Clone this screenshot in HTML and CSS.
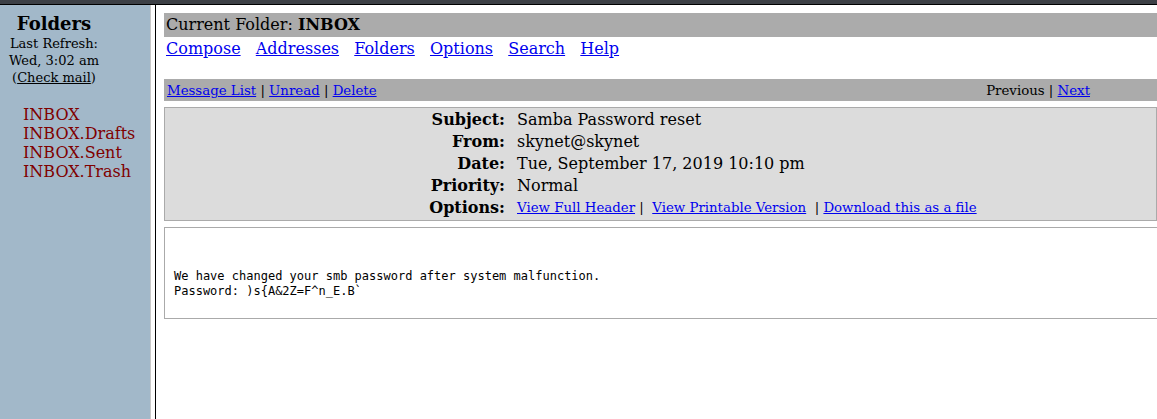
FILE: index.html
```html
<!DOCTYPE html>
<html>
<head>
<meta charset="utf-8">
<title>SquirrelMail</title>
<link rel="stylesheet" href="styles.css">
</head>
<body>
<div class="topbar"></div>
<div class="frames">
  <aside class="left">
    <div class="left-head">
      <div class="folders-title">Folders</div>
      <div class="refresh">Last Refresh:<br>Wed, 3:02 am<br>(<a href="#" class="check">Check mail</a>)</div>
    </div>
    <ul class="folder-list">
      <li>INBOX</li>
      <li>INBOX.Drafts</li>
      <li>INBOX.Sent</li>
      <li>INBOX.Trash</li>
    </ul>
  </aside>
  <div class="divider"></div>
  <main class="right">
    <div class="current">Current Folder: <b>INBOX</b></div>
    <nav class="menu">
      <a href="#">Compose</a>
      <a href="#">Addresses</a>
      <a href="#">Folders</a>
      <a href="#">Options</a>
      <a href="#">Search</a>
      <a href="#">Help</a>
    </nav>
    <div class="msgbar">
      <div class="msgbar-left"><a href="#">Message List</a> | <a href="#">Unread</a> | <a href="#">Delete</a></div>
      <div class="msgbar-right">Previous | <a href="#">Next</a></div>
    </div>
    <div class="headers">
      <div class="lbl">Subject:</div><div class="val">Samba Password reset</div>
      <div class="lbl">From:</div><div class="val">skynet@skynet</div>
      <div class="lbl">Date:</div><div class="val">Tue, September 17, 2019 10:10 pm</div>
      <div class="lbl">Priority:</div><div class="val">Normal</div>
      <div class="lbl">Options:</div><div class="val small"><a href="#">View Full Header</a>&nbsp;|&nbsp; <a href="#">View Printable Version</a>&nbsp; | <a href="#">Download this as a file</a></div>
    </div>
    <div class="body-box"><pre class="msg">We have changed your smb password after system malfunction.
Password: )s{A&amp;2Z=F^n_E.B`</pre></div>
  </main>
</div>
</body>
</html>
```
FILE: styles.css
```css
html, body {
  margin: 0;
  padding: 0;
  height: 100%;
  overflow: hidden;
}
body {
  font-family: "DejaVu Serif", serif;
  font-size: 16px;
  color: #000;
  background: #fff;
  display: flex;
  flex-direction: column;
}
a { color: #0000ee; }
.topbar {
  height: 4px;
  background: #3d4046;
  border-bottom: 1px solid #000;
  flex: none;
}
.frames {
  flex: 1;
  display: flex;
  min-height: 0;
}
.left {
  width: 150px;
  flex: none;
  background: #a2b8c9;
}
.left-head {
  width: 108px;
  text-align: center;
  padding-top: 9px;
}
.folders-title {
  font-weight: bold;
  font-size: 18px;
  line-height: 20px;
}
.refresh {
  font-size: 13px;
  line-height: 17px;
  margin-top: 1px;
}
.check { color: #000; }
.folder-list {
  list-style: none;
  margin: 19px 0 0 23px;
  padding: 0;
  color: #800000;
  line-height: 19px;
}
.divider {
  width: 4px;
  flex: none;
  background: #fff;
  border-left: 1px solid #c8c8c8;
  border-right: 1px solid #000;
}
.right {
  flex: 1;
  padding: 8px 0 0 8px;
  min-width: 0;
}
.current {
  background: #ababab;
  height: 24px;
  line-height: 24px;
  padding-left: 2px;
}
.menu {
  display: flex;
  gap: 15.2px;
  padding-left: 2px;
  height: 24px;
  line-height: 24px;
}
.msgbar {
  margin-top: 18px;
  background: #ababab;
  height: 22px;
  display: flex;
  align-items: center;
  justify-content: space-between;
  font-size: 13.333px;
  padding-left: 3px;
}
.msgbar-right { padding-right: 67px; }
.headers {
  margin-top: 6px;
  background: #dcdcdc;
  border: 1px solid #aaa;
  display: grid;
  grid-template-columns: 340px 1fr;
  column-gap: 12px;
  grid-auto-rows: 22px;
  padding-bottom: 2px;
  align-items: center;
}
.lbl {
  font-weight: bold;
  text-align: right;
}
.val.small { font-size: 13.333px; }
.body-box {
  margin-top: 6px;
  border: 1px solid #aaa;
  border-right: none;
  height: 90px;
}
.msg {
  margin: 0;
  padding: 41px 0 0 9px;
  font-family: "DejaVu Sans Mono", monospace;
  font-size: 12px;
  line-height: 15px;
}
```
